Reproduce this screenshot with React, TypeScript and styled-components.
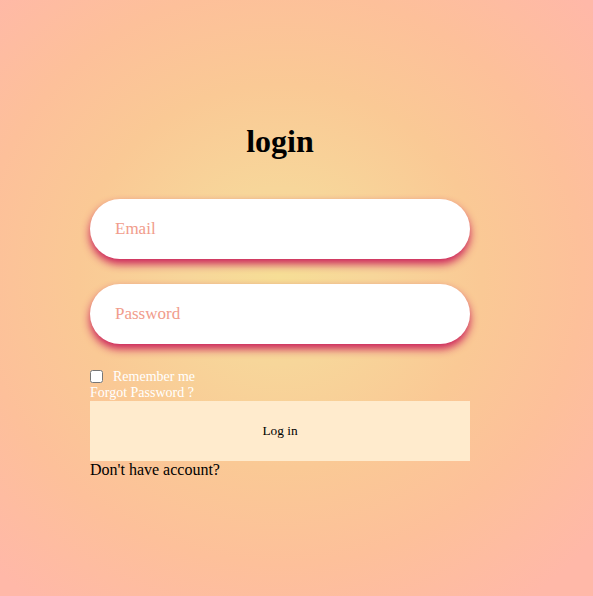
import React from "react";
import styled, { createGlobalStyle } from "styled-components";

const Global = createGlobalStyle`
  html, body { margin: 0; padding: 0; }
  body {
    width: 593px;
    height: 596px;
    overflow: hidden;
    font-family: "Liberation Serif", "Times New Roman", serif;
    background: radial-gradient(ellipse 420px 400px at 280px 276px, #f6de96 0%, #f7d69a 22%, #fac995 48%, #fdc09a 72%, #ffb8a8 100%);
  }
`;

const Page = styled.div`
  width: 593px;
  height: 596px;
  padding-left: 90px;
  box-sizing: border-box;
`;

const Form = styled.form`
  width: 380px;
  display: flex;
  flex-direction: column;
  padding-top: 123px;
`;

const Title = styled.h1`
  margin: 0 0 39px;
  font-size: 32px;
  line-height: 37px;
  font-weight: bold;
  text-align: center;
  color: #000;
`;

const Field = styled.input<{ $gap?: number }>`
  height: 60px;
  width: 100%;
  box-sizing: border-box;
  border: none;
  border-radius: 30px;
  background: #fff;
  padding: 0 25px;
  font-family: "Liberation Serif", "Times New Roman", serif;
  font-size: 17px;
  outline: none;
  margin-bottom: ${(p) => p.$gap ?? 0}px;
  box-shadow: 0 5px 8px rgba(200, 24, 86, 0.95);
  &::placeholder { color: #f19c8b; }
`;

const RememberRow = styled.label`
  display: flex;
  align-items: center;
  margin-top: 25px;
  height: 15px;
  font-size: 14px;
  color: #fff;
`;

const Check = styled.input`
  width: 13px;
  height: 13px;
  margin: 0 10px 0 0;
`;

const Forgot = styled.a`
  font-size: 14px;
  line-height: 17px;
  color: #fff;
  text-decoration: none;
`;

const Submit = styled.button`
  height: 60px;
  width: 100%;
  border: none;
  background: #ffebcd;
  font-family: "Liberation Serif", "Times New Roman", serif;
  font-size: 13.33px;
  color: #000;
  padding: 0;
`;

const Footer = styled.p`
  margin: 0;
  font-size: 16px;
  line-height: 18px;
  color: #000;
`;

export default function App() {
  return (
    <>
      <Global />
      <Page>
        <Form onSubmit={(e) => e.preventDefault()}>
          <Title>login</Title>
          <Field type="email" placeholder="Email" $gap={25} />
          <Field type="password" placeholder="Password" />
          <RememberRow>
            <Check type="checkbox" />
            Remember me
          </RememberRow>
          <Forgot href="#">Forgot Password ?</Forgot>
          <Submit type="submit">Log in</Submit>
          <Footer>Don't have account?</Footer>
        </Form>
      </Page>
    </>
  );
}
